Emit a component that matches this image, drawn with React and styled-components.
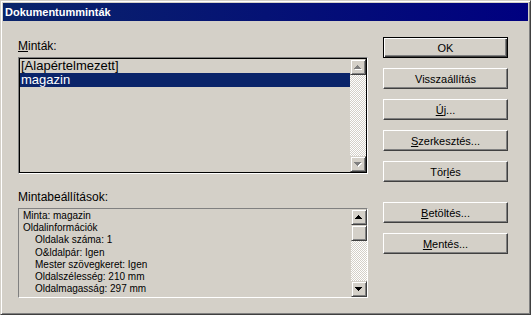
import React from 'react';
import styled, { createGlobalStyle } from 'styled-components';

const GlobalStyle = createGlobalStyle`
  html, body {
    margin: 0;
    padding: 0;
    background: #d4d0c8;
  }
  * {
    box-sizing: border-box;
  }
`;

const templates = ['[Alapértelmezett]', 'magazin'];

const settings = [
  { text: 'Minta: magazin', level: 0 },
  { text: 'Oldalinformációk', level: 0 },
  { text: 'Oldalak száma: 1', level: 1 },
  { text: 'O&ldalpár: Igen', level: 1 },
  { text: 'Mester szövegkeret: Igen', level: 1 },
  { text: 'Oldalszélesség: 210 mm', level: 1 },
  { text: 'Oldalmagasság: 297 mm', level: 1 }
];

const Arrow = ({ dir, disabled }) => {
  const d = dir === 'up' ? 'M0 4h7M1 3h5M2 2h3M3 1h1' : 'M0 1h7M1 2h5M2 3h3M3 4h1';
  return (
    <svg width="8" height="6" viewBox="0 0 8 6" shapeRendering="crispEdges">
      {disabled && (
        <path d={d} transform="translate(1 1)" stroke="#fff" strokeWidth="1" fill="none" />
      )}
      <path d={d} transform="translate(0 0.5)" stroke={disabled ? '#808080' : '#000'} strokeWidth="1" fill="none" />
    </svg>
  );
};

const ScrollBar = ({ disabled, thumb }) => (
  <Scroll>
    <ScrollButton>
      <Arrow dir="up" disabled={disabled} />
    </ScrollButton>
    {thumb && <Thumb />}
    <Track />
    <ScrollButton>
      <Arrow dir="down" disabled={disabled} />
    </ScrollButton>
  </Scroll>
);

export default function App() {
  return (
    <>
      <GlobalStyle />
      <Window>
        <TitleBar>Dokumentumminták</TitleBar>
        <Body>
          <Left>
            <Label>
              <u>M</u>inták:
            </Label>
            <ListBox>
              <ListItems>
                {templates.map((name, i) => (
                  <ListItem key={name} selected={i === 1}>
                    {name}
                  </ListItem>
                ))}
              </ListItems>
              <ScrollBar disabled />
            </ListBox>
            <Label $top={16}>Mintabeállítások:</Label>
            <InfoBox>
              <InfoLines>
                {settings.map(line => (
                  <InfoLine key={line.text} level={line.level}>
                    {line.text}
                  </InfoLine>
                ))}
              </InfoLines>
              <ScrollBar thumb />
            </InfoBox>
          </Left>
          <Buttons>
            <Button $default>OK</Button>
            <Button>Visszaállítás</Button>
            <Button>
              <u>Ú</u>j...
            </Button>
            <Button>
              <u>S</u>zerkesztés...
            </Button>
            <Button>
              Tör<u>l</u>és
            </Button>
            <Button $top={10}>
              <u>B</u>etöltés...
            </Button>
            <Button>
              <u>M</u>entés...
            </Button>
          </Buttons>
        </Body>
      </Window>
    </>
  );
}

const Window = styled.div`
  width: 531px;
  height: 315px;
  padding: 2px;
  background: #d4d0c8;
  border: 1px solid;
  border-color: #d4d0c8 #404040 #404040 #d4d0c8;
  box-shadow: inset 1px 1px #fff, inset -1px -1px #808080;
  font-family: 'Liberation Sans', Arial, sans-serif;
  color: #000;
`;
const TitleBar = styled.div`
  height: 18px;
  padding: 0 2px;
  background: linear-gradient(to right, #0a246a, #000080);
  color: #fff;
  font-size: 11px;
  font-weight: bold;
  line-height: 18px;
`;
const Body = styled.div`
  display: flex;
  gap: 15px;
  padding: 16px 0 0 15px;
`;
const Left = styled.div`
  width: 350px;
  display: flex;
  flex-direction: column;
`;
const Label = styled.div`
  font-size: 12px;
  line-height: 14px;
  margin: ${p => p.$top || 2}px 0 4px;
  u {
    text-decoration-thickness: 1px;
    text-underline-offset: 1px;
  }
`;
const ListBox = styled.div`
  display: flex;
  height: 117px;
  border: 1px solid;
  border-color: #808080 #fff #fff #808080;
  box-shadow: inset 1px 1px #000, inset -1px -1px #000;
  padding: 1px;
  background: #d4d0c8;
`;
const ListItems = styled.div`
  flex: 1;
`;
const ListItem = styled.div`
  height: 14px;
  padding-left: 1px;
  font-size: 13px;
  line-height: 14px;
  white-space: nowrap;
  background: ${p => (p.selected ? '#0a246a' : 'transparent')};
  color: ${p => (p.selected ? '#fff' : '#000')};
`;
const Scroll = styled.div`
  width: 16px;
  display: flex;
  flex-direction: column;
`;
const ScrollButton = styled.div`
  width: 16px;
  height: 16px;
  flex: none;
  display: flex;
  align-items: center;
  justify-content: center;
  background: #d4d0c8;
  border: 1px solid;
  border-color: #d4d0c8 #404040 #404040 #d4d0c8;
  box-shadow: inset 1px 1px #fff, inset -1px -1px #808080;
`;
const Thumb = styled(ScrollButton)``;
const Track = styled.div`
  flex: 1;
  background: repeating-conic-gradient(#fff 0 25%, #d4d0c8 0 50%) 0 0 / 2px 2px;
`;
const InfoBox = styled.div`
  display: flex;
  height: 90px;
  border: 1px solid;
  border-color: #808080 #fff #fff #808080;
  background: #d4d0c8;
`;
const InfoLines = styled.div`
  flex: 1;
  padding: 1px 0 0 4px;
  overflow: hidden;
`;
const InfoLine = styled.div`
  font-size: 10px;
  line-height: 12.2px;
  white-space: nowrap;
  padding-left: ${p => p.level * 12}px;
`;
const Buttons = styled.div`
  width: 125px;
  display: flex;
  flex-direction: column;
  gap: 10px;
`;
const Button = styled.div`
  height: 21px;
  margin-top: ${p => p.$top || 0}px;
  display: flex;
  align-items: center;
  justify-content: center;
  font-size: 11px;
  background: #d4d0c8;
  border: 1px solid;
  border-color: ${p => (p.$default ? '#000' : '#fff #404040 #404040 #fff')};
  box-shadow: ${p =>
    p.$default
      ? 'inset 1px 1px #fff, inset -1px -1px #404040, inset -2px -2px #808080'
      : 'inset -1px -1px #808080'};
  u {
    text-decoration-thickness: 1px;
    text-underline-offset: 1px;
  }
`;
